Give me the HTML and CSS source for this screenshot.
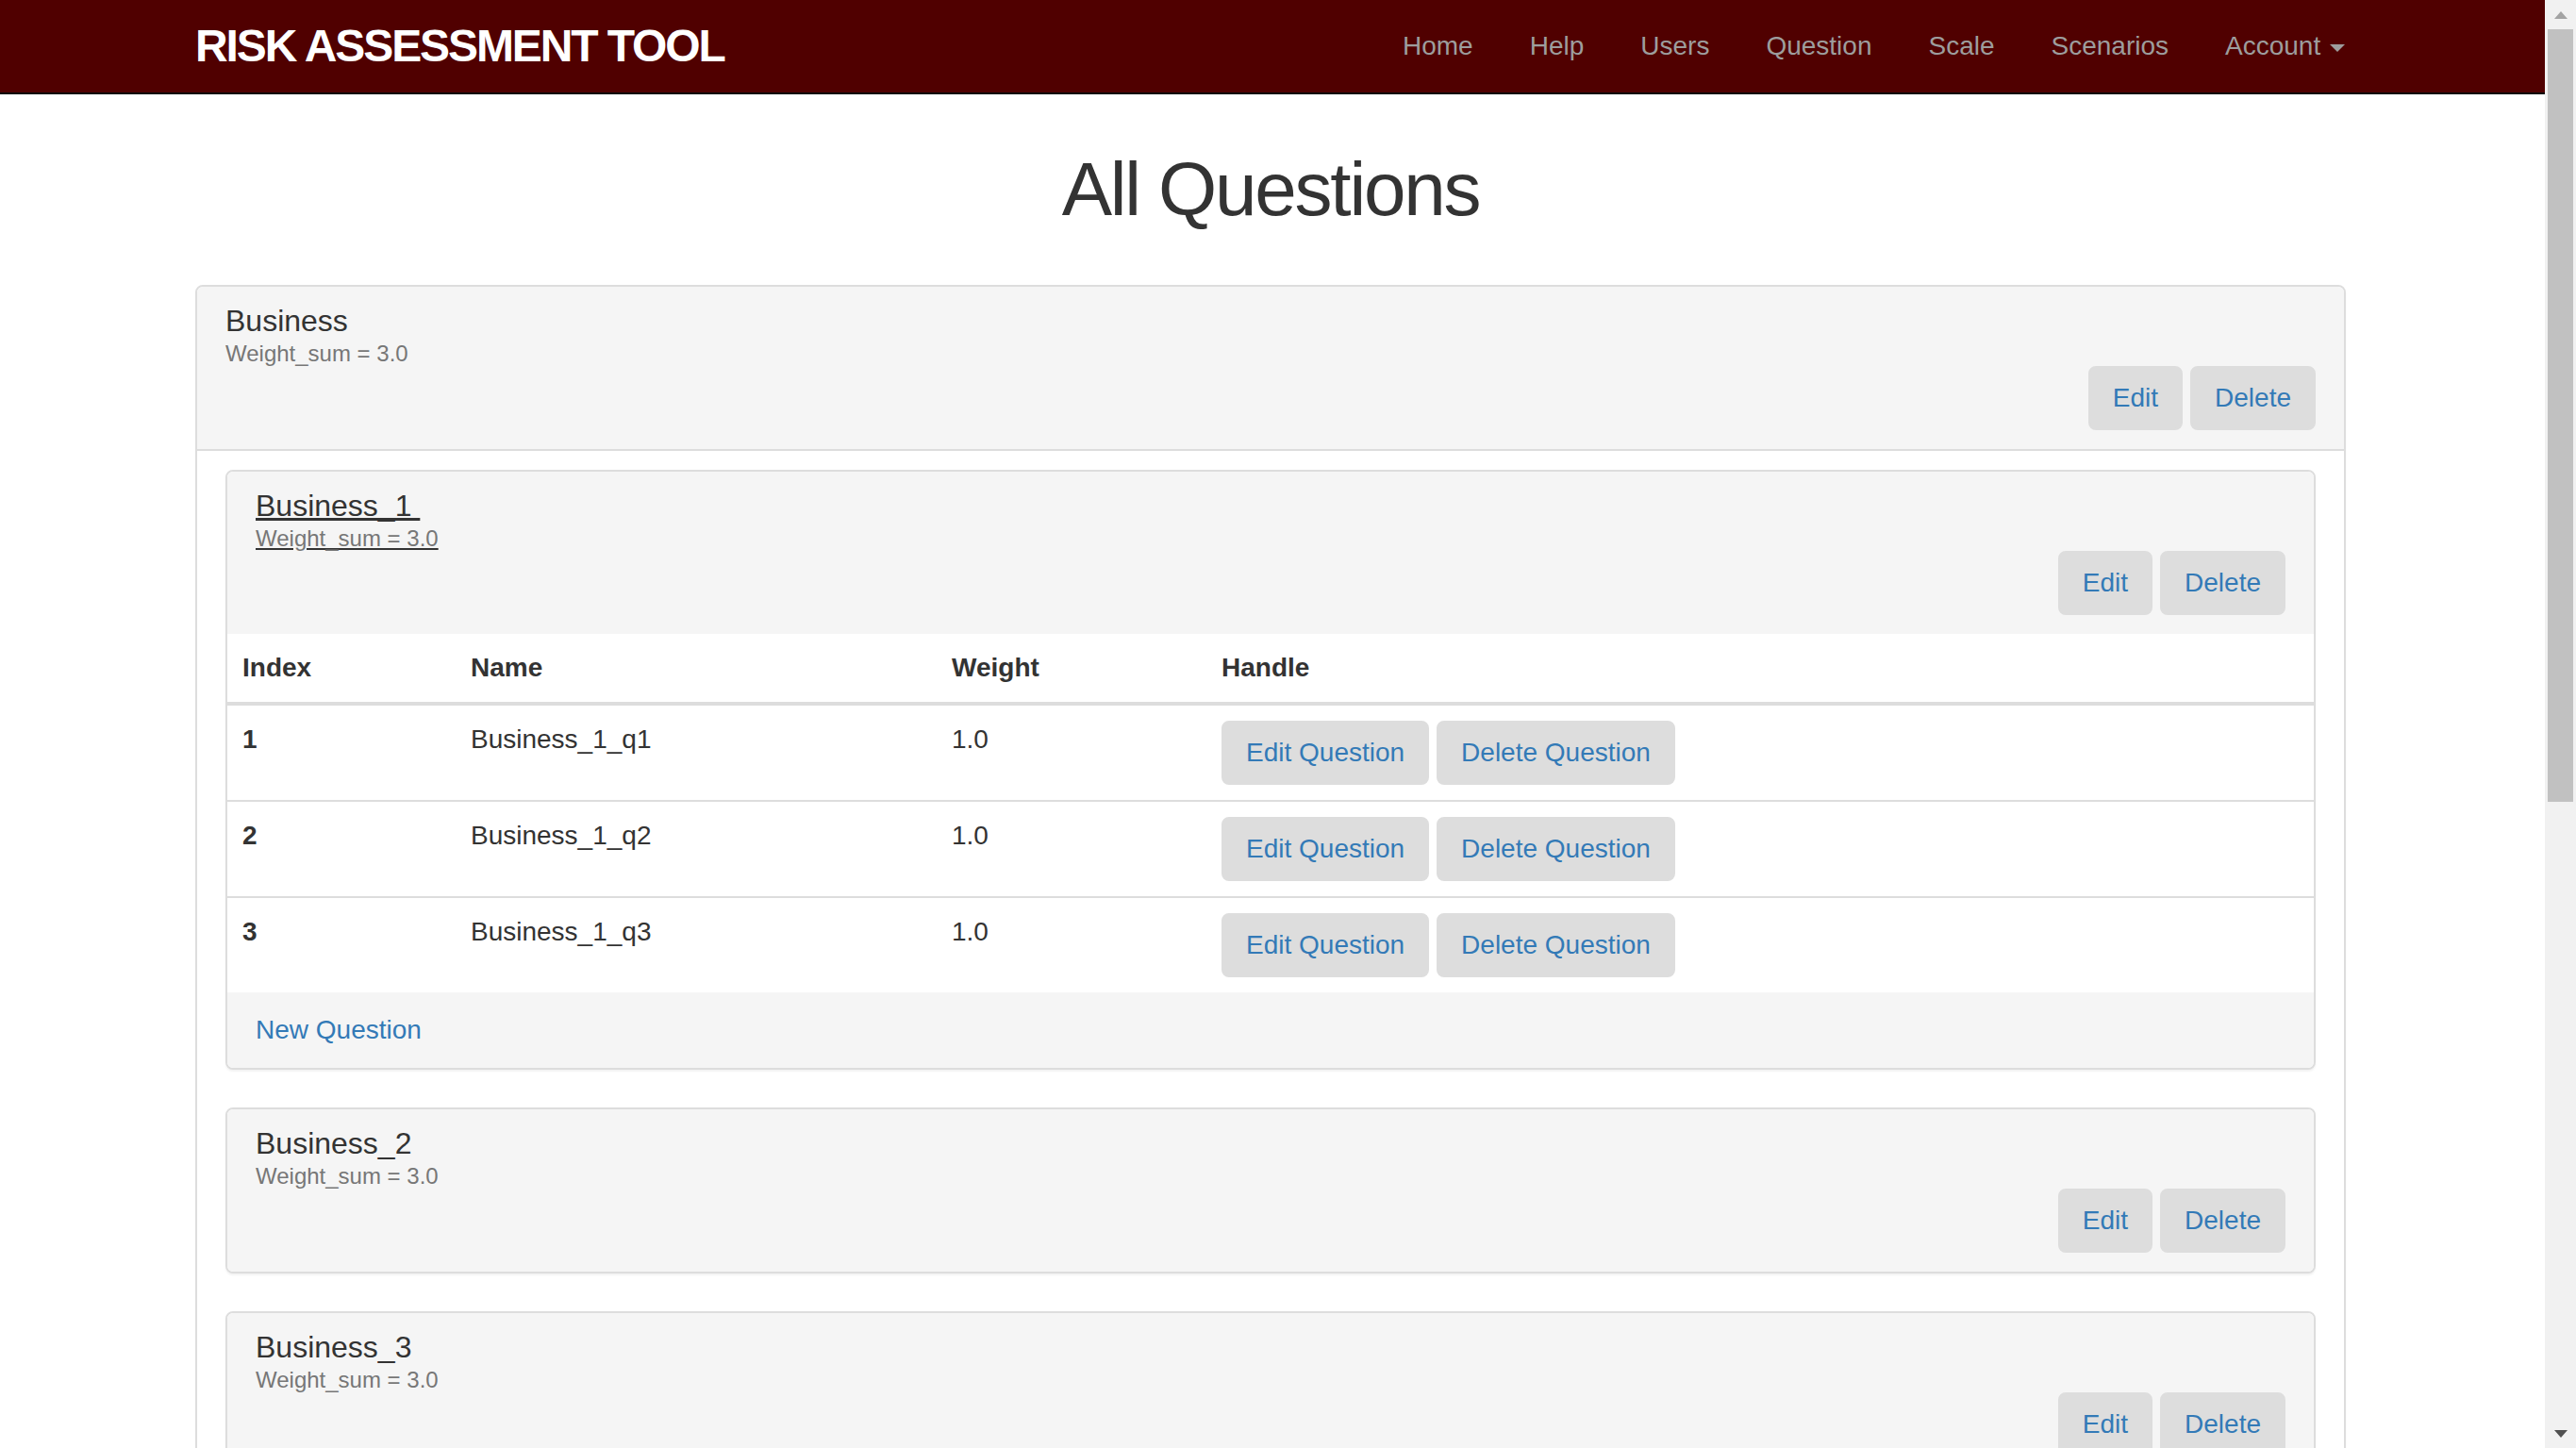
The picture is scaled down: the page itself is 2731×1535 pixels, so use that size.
FILE: index.html
```html
<!DOCTYPE html>
<html lang="en">
<head>
<meta charset="utf-8">
<title>All Questions</title>
<link rel="stylesheet" href="styles.css">
</head>
<body>
<div class="window">
  <div class="main">
    <nav class="navbar">
      <div class="shift">
        <div class="container nav-inner">
          <a class="brand" href="#">RISK ASSESSMENT TOOL</a>
          <ul class="nav">
            <li><a href="#">Home</a></li>
            <li><a href="#">Help</a></li>
            <li><a href="#">Users</a></li>
            <li><a href="#">Question</a></li>
            <li><a href="#">Scale</a></li>
            <li><a href="#">Scenarios</a></li>
            <li><a href="#">Account <span class="caret"></span></a></li>
          </ul>
        </div>
      </div>
    </nav>

    <div class="shift">
      <div class="container">
        <h1 class="page-title">All Questions</h1>

        <div class="panel">
          <div class="panel-heading bordered">
            <div class="title">Business</div>
            <div class="sub">Weight_sum = 3.0</div>
            <div class="actions">
              <button class="btn">Edit</button>
              <button class="btn">Delete</button>
            </div>
          </div>
          <div class="panel-body">

            <div class="panel">
              <div class="panel-heading">
                <div class="title"><a class="ulink" href="#">Business_1&nbsp;</a></div>
                <div class="sub"><a class="ulink sub-link" href="#">Weight_sum = 3.0</a></div>
                <div class="actions">
                  <button class="btn">Edit</button>
                  <button class="btn">Delete</button>
                </div>
              </div>
              <table class="qtable">
                <colgroup>
                  <col class="c-index">
                  <col class="c-name">
                  <col class="c-weight">
                  <col>
                </colgroup>
                <thead>
                  <tr><th>Index</th><th>Name</th><th>Weight</th><th>Handle</th></tr>
                </thead>
                <tbody>
                  <tr>
                    <td class="idx">1</td><td>Business_1_q1</td><td>1.0</td>
                    <td><div class="btns"><button class="btn">Edit Question</button><button class="btn">Delete Question</button></div></td>
                  </tr>
                  <tr>
                    <td class="idx">2</td><td>Business_1_q2</td><td>1.0</td>
                    <td><div class="btns"><button class="btn">Edit Question</button><button class="btn">Delete Question</button></div></td>
                  </tr>
                  <tr>
                    <td class="idx">3</td><td>Business_1_q3</td><td>1.0</td>
                    <td><div class="btns"><button class="btn">Edit Question</button><button class="btn">Delete Question</button></div></td>
                  </tr>
                </tbody>
              </table>
              <div class="panel-footer"><a class="link" href="#">New Question</a></div>
            </div>

            <div class="panel">
              <div class="panel-heading solo">
                <div class="title">Business_2</div>
                <div class="sub">Weight_sum = 3.0</div>
                <div class="actions">
                  <button class="btn">Edit</button>
                  <button class="btn">Delete</button>
                </div>
              </div>
            </div>

            <div class="panel">
              <div class="panel-heading solo">
                <div class="title">Business_3</div>
                <div class="sub">Weight_sum = 3.0</div>
                <div class="actions">
                  <button class="btn">Edit</button>
                  <button class="btn">Delete</button>
                </div>
              </div>
            </div>

          </div>
        </div>
      </div>
    </div>
  </div>

  <div class="scrollbar">
    <div class="sb-btn">
      <svg width="14" height="8" viewBox="0 0 14 8"><polygon points="7,0 14,8 0,8" class="arrow-up"/></svg>
    </div>
    <div class="sb-thumb"></div>
    <div class="sb-track"></div>
    <div class="sb-btn">
      <svg width="14" height="8" viewBox="0 0 14 8"><polygon points="0,0 14,0 7,8" class="arrow-down"/></svg>
    </div>
  </div>
</div>
</body>
</html>
```

FILE: styles.css
```css
* {
  box-sizing: border-box;
}

html,
body {
  margin: 0;
  padding: 0;
  height: 100%;
  overflow: hidden;
}

body {
  font-family: "Liberation Sans", Arial, Helvetica, sans-serif;
  font-size: 28px;
  line-height: 40px;
  color: #333333;
  background: #ffffff;
}

.window {
  display: flex;
  height: 100vh;
}

.main {
  flex: 1;
  min-width: 0;
  overflow: hidden;
}

.shift {
  padding-right: 4px;
}

.container {
  width: 2340px;
  margin: 0 auto;
  padding: 0 30px;
}

/* Navbar */
.navbar {
  background: #500000;
  border-bottom: 2px solid #0a0a0a;
}

.nav-inner {
  display: flex;
  align-items: center;
  height: 98px;
}

.brand {
  color: #ffffff;
  font-weight: bold;
  font-size: 48px;
  line-height: 48px;
  letter-spacing: -2.1px;
  text-decoration: none;
}

.nav {
  display: flex;
  list-style: none;
  margin: 0 -29px 0 auto;
  padding: 0;
}

.nav a {
  display: block;
  padding: 29px 30px;
  line-height: 40px;
  font-size: 28px;
  color: #9d9d9d;
  text-decoration: none;
}

.caret {
  display: inline-block;
  width: 0;
  height: 0;
  margin-left: 2px;
  vertical-align: middle;
  border-top: 8px solid #9d9d9d;
  border-left: 8px solid transparent;
  border-right: 8px solid transparent;
}

/* Title */
.page-title {
  font-size: 80px;
  line-height: 88px;
  font-weight: normal;
  letter-spacing: -2.2px;
  text-align: center;
  color: #333333;
  margin: 57px 0 57px;
}

/* Panels */
.panel {
  background: #ffffff;
  border: 2px solid #dddddd;
  border-radius: 8px;
  margin-bottom: 40px;
  box-shadow: 0 2px 2px rgba(0, 0, 0, 0.05);
}

.panel-heading {
  background: #f5f5f5;
  padding: 18px 30px 20px;
  border-radius: 6px 6px 0 0;
}

.panel-heading.bordered {
  border-bottom: 2px solid #dddddd;
}

.panel-heading.solo {
  border-radius: 6px;
}

.title {
  font-size: 32px;
  line-height: 36px;
  color: #333333;
}

.sub {
  font-size: 24px;
  line-height: 26px;
  padding-top: 4px;
  color: #777777;
}

.ulink {
  color: #333333;
  text-decoration: underline;
  text-decoration-color: #333333;
}

.sub-link {
  color: #777777;
}

.actions {
  display: flex;
  justify-content: flex-end;
  gap: 8px;
}

.btn {
  font-family: "Liberation Sans", Arial, Helvetica, sans-serif;
  font-size: 28px;
  line-height: 40px;
  padding: 12px 24px;
  border: 2px solid #dddddd;
  border-radius: 8px;
  background: #dddddd;
  color: #337ab7;
  margin: 0;
  cursor: pointer;
}

.panel-body {
  padding: 20px 30px;
}

.panel-footer {
  background: #f5f5f5;
  padding: 20px 30px;
  border-radius: 0 0 6px 6px;
}

.link {
  color: #337ab7;
  text-decoration: none;
}

/* Table */
.qtable {
  width: 100%;
  border-collapse: collapse;
  table-layout: fixed;
  background: #ffffff;
}

.c-index {
  width: 242px;
}

.c-name {
  width: 510px;
}

.c-weight {
  width: 286px;
}

.qtable th {
  text-align: left;
  font-weight: bold;
  padding: 16px;
  line-height: 40px;
  border-bottom: 4px solid #dddddd;
}

.qtable td {
  padding: 16px;
  line-height: 40px;
  vertical-align: top;
  border-top: 2px solid #dddddd;
}

.qtable td.idx {
  font-weight: bold;
}

.btns {
  display: flex;
  gap: 8px;
}

/* Fake window scrollbar */
.scrollbar {
  width: 33px;
  flex: none;
  background: #f1f1f1;
  display: flex;
  flex-direction: column;
}

.sb-btn {
  height: 31px;
  display: flex;
  align-items: center;
  justify-content: center;
}

.arrow-up {
  fill: #a3a3a3;
}

.arrow-down {
  fill: #505050;
}

.sb-thumb {
  height: 819px;
  margin: 0 3px;
  background: #c1c1c1;
}

.sb-track {
  flex: 1;
}
```
